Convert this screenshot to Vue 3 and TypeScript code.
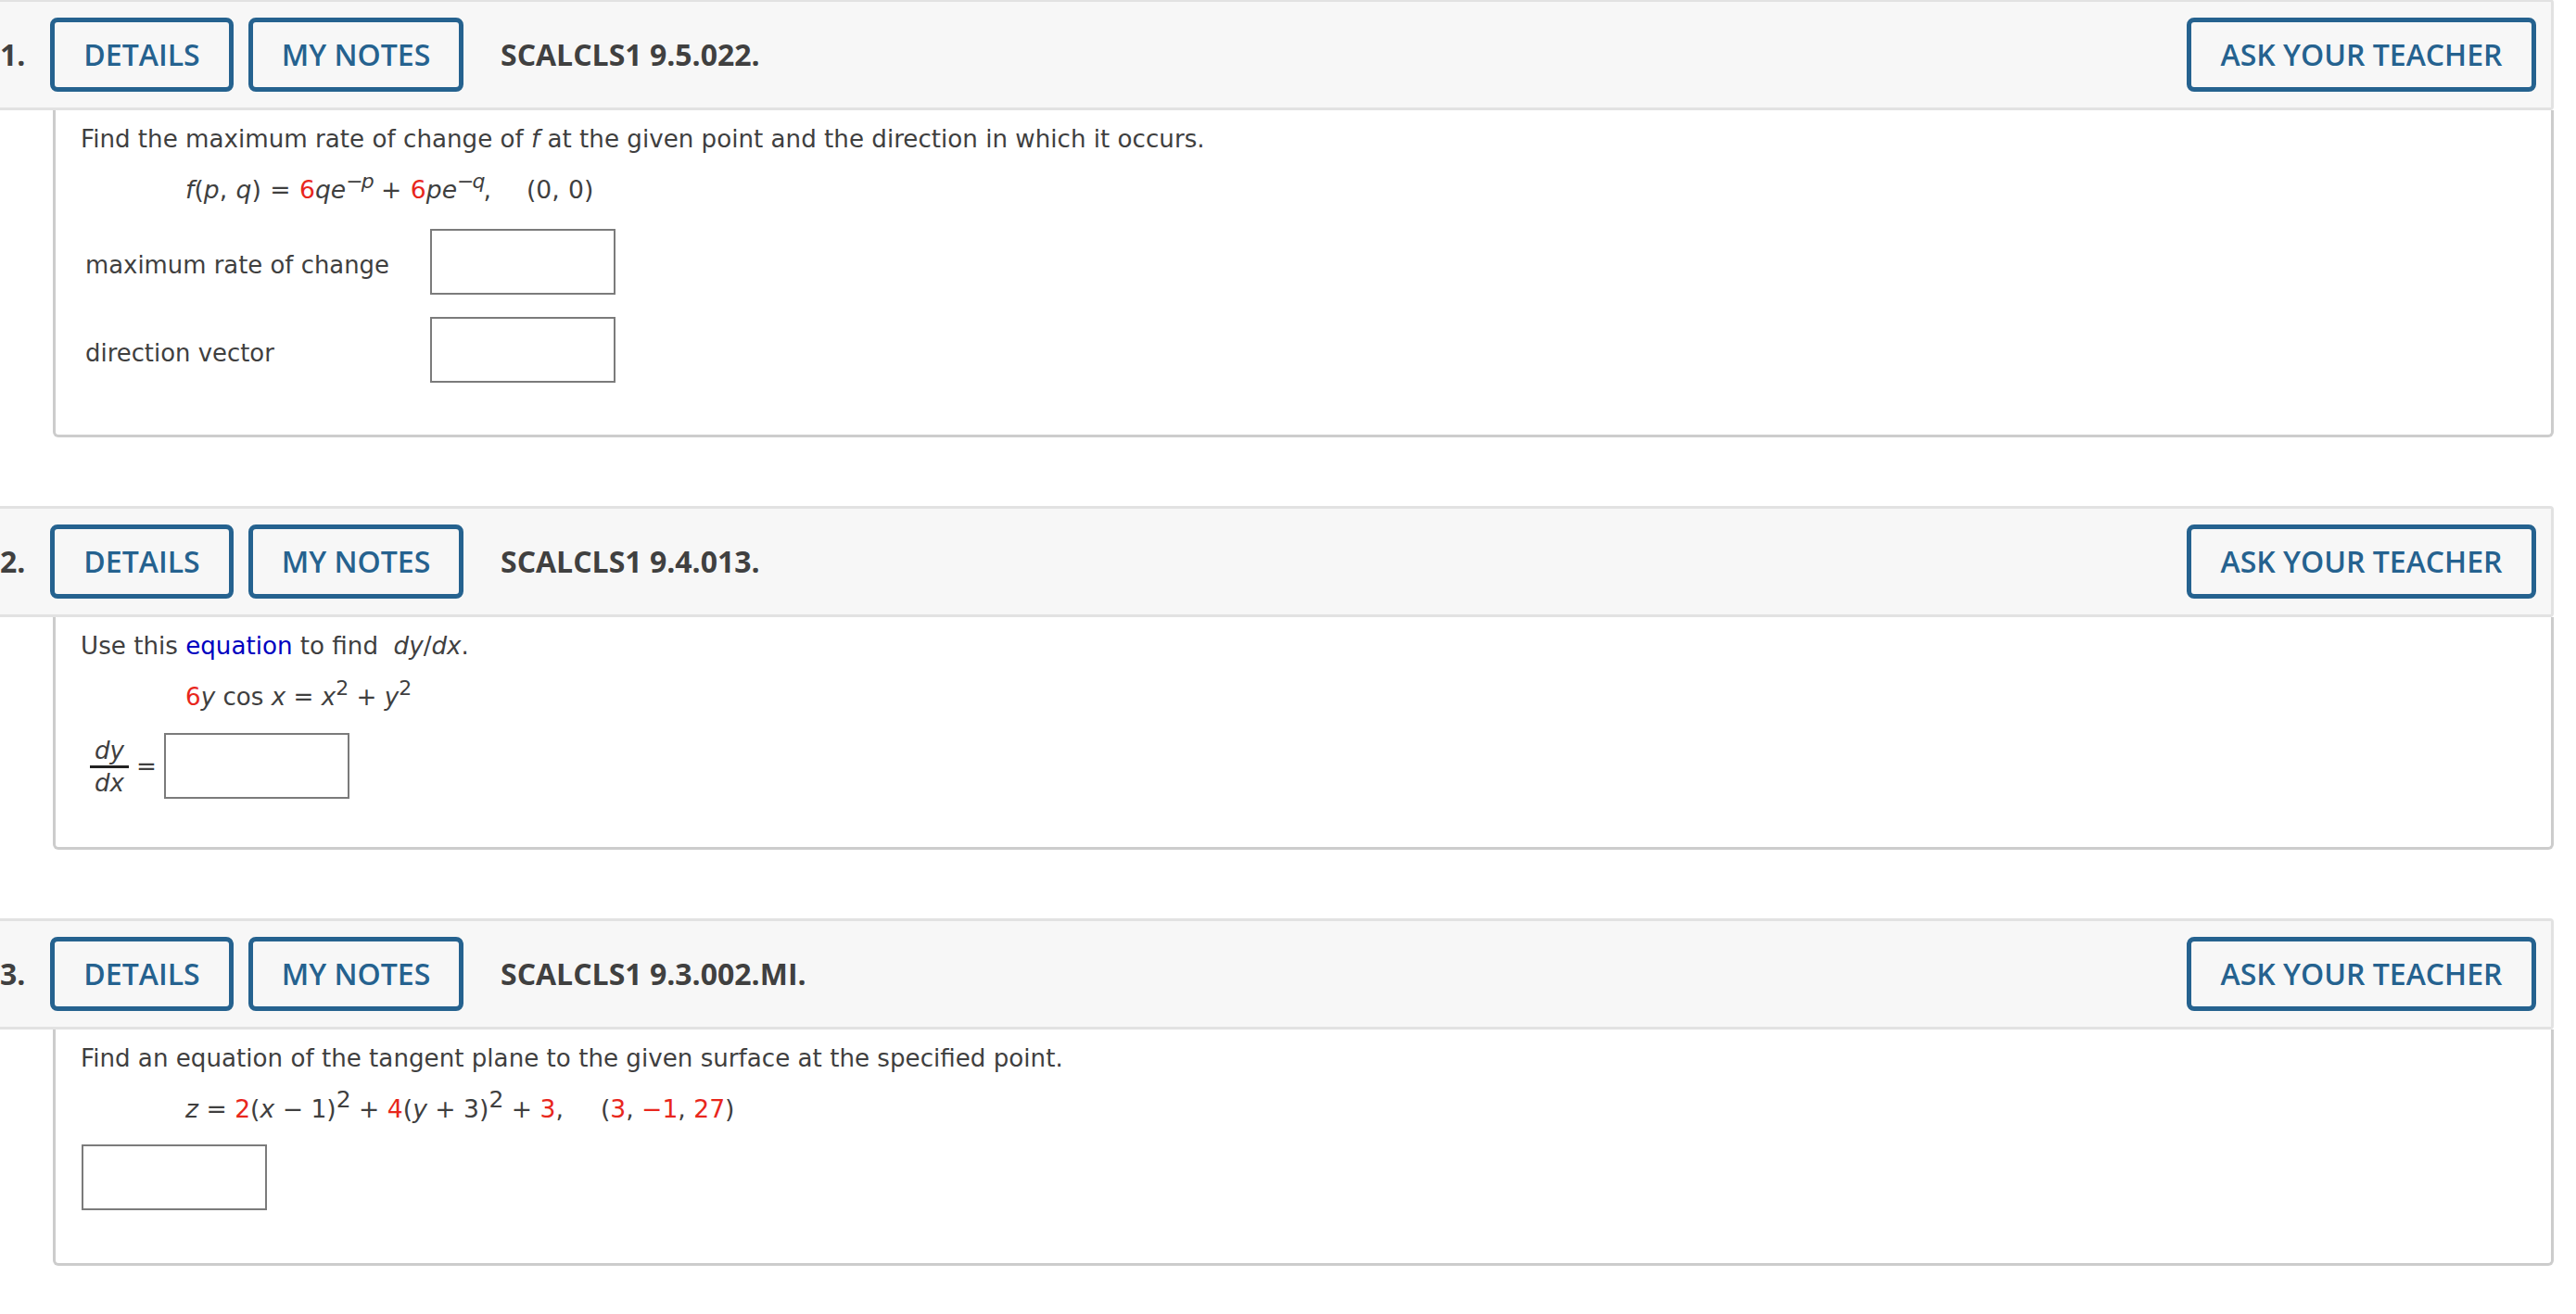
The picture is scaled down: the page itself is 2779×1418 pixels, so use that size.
<script setup lang="ts">
</script>

<template>
  <div class="page">
    <section class="question q1">
      <header class="bar">
        <span class="num">1.</span>
        <button class="btn details">DETAILS</button>
        <button class="btn notes">MY NOTES</button>
        <span class="code">SCALCLS1 9.5.022.</span>
        <button class="btn ask">ASK YOUR TEACHER</button>
      </header>
      <div class="body">
        <p class="line">Find the maximum rate of change of <i>f</i> at the given point and the direction in which it occurs.</p>
        <p class="eq"><i>f</i>(<i>p</i>, <i>q</i>) = <span class="r">6</span><i>qe</i><sup>&minus;<i>p</i></sup> + <span class="r">6</span><i>pe</i><sup>&minus;<i>q</i></sup>,<span class="gap"></span>(0, 0)</p>
        <div class="grid">
          <span class="label">maximum rate of change</span><span class="box"></span>
          <span class="label">direction vector</span><span class="box"></span>
        </div>
      </div>
    </section>

    <section class="question q2">
      <header class="bar">
        <span class="num">2.</span>
        <button class="btn details">DETAILS</button>
        <button class="btn notes">MY NOTES</button>
        <span class="code">SCALCLS1 9.4.013.</span>
        <button class="btn ask">ASK YOUR TEACHER</button>
      </header>
      <div class="body">
        <p class="line">Use this <span class="link">equation</span> to find&nbsp; <i>dy</i>/<i>dx</i>.</p>
        <p class="eq"><span class="r">6</span><i>y</i> cos <i>x</i> = <i>x</i><sup>2</sup> + <i>y</i><sup>2</sup></p>
        <div class="answer">
          <span class="frac"><i class="top">dy</i><i class="bottom">dx</i></span>
          <span class="equals">=</span>
          <span class="box"></span>
        </div>
      </div>
    </section>

    <section class="question q3">
      <header class="bar">
        <span class="num">3.</span>
        <button class="btn details">DETAILS</button>
        <button class="btn notes">MY NOTES</button>
        <span class="code">SCALCLS1 9.3.002.MI.</span>
        <button class="btn ask">ASK YOUR TEACHER</button>
      </header>
      <div class="body">
        <p class="line">Find an equation of the tangent plane to the given surface at the specified point.</p>
        <p class="eq"><i>z</i> = <span class="r">2</span>(<i>x</i> &minus; 1)<sup>2</sup> + <span class="r">4</span>(<i>y</i> + 3)<sup>2</sup> + <span class="r">3</span>,<span class="gap"></span>(<span class="r">3</span>, <span class="r">&minus;1</span>, <span class="r">27</span>)</p>
        <div class="solo"><span class="box"></span></div>
      </div>
    </section>
  </div>
</template>

<style>
html, body { margin: 0; background: #fff; }
</style>

<style scoped>
.page {
  width: 2779px;
  height: 1418px;
  overflow: hidden;
  background: #fff;
  font-family: "DejaVu Sans", Verdana, sans-serif;
  color: #3f3f3f;
}
.question { width: 2755px; box-sizing: border-box; margin-bottom: 74px; }
.q1 { margin-top: -1px; }
.bar {
  height: 120px;
  box-sizing: border-box;
  display: flex;
  align-items: center;
  background: #f7f7f7;
  border: 3px solid #e2e2e2;
  border-left: 0;
  border-radius: 0 4px 4px 0;
  font-family: "Open Sans", sans-serif;
}
.num { width: 54px; padding-bottom: 2px; font-size: 32px; font-weight: 700; color: #404040; }
.btn {
  height: 80px;
  box-sizing: border-box;
  border: 5px solid #25628f;
  border-radius: 8px;
  background: transparent;
  color: #25628f;
  font-family: "Open Sans", sans-serif;
  font-size: 32px;
  font-weight: 600;
  padding: 0 0 2px;
}
.details { width: 198px; }
.notes { width: 232px; margin-left: 16px; }
.ask { width: 377px; margin-left: auto; margin-right: 16px; }
.code { margin-left: 40px; padding-bottom: 2px; font-size: 32px; font-weight: 700; color: #404040; }
.body {
  margin-left: 57px;
  border: 3px solid #cccccc;
  border-top: 0;
  border-radius: 0 0 6px 6px;
  box-sizing: border-box;
  padding: 14px 0 0 27px;
  font-size: 26.15px;
  line-height: 34px;
}
.q1 .body { height: 353px; }
.q2 .body { height: 251px; }
.q3 .body { height: 255px; }
p { margin: 0; }
.eq { margin: 21px 0 0 113px; height: 34px; white-space: nowrap; font-size: 26.6px; }
.q1 .eq { word-spacing: 1px; }
.q2 .eq { font-size: 26.15px; }
sup { font-size: 25px; line-height: 0; vertical-align: 11px; }
.q1 sup, .q2 sup { font-size: 22px; }
.q1 sup { letter-spacing: -2px; }
.gap { display: inline-block; }
.q1 .gap { width: 38px; }
.q3 .gap { width: 40px; }
.r { color: #e8261c; }
.link { color: #0000c0; }
.box {
  display: block;
  width: 200px;
  height: 71px;
  box-sizing: border-box;
  border: 2px solid #7b7b7b;
  background: #fff;
}
.grid {
  display: grid;
  grid-template-columns: 372px 200px;
  row-gap: 24px;
  margin: 25px 0 0 5px;
  align-items: center;
}
.label { position: relative; top: 3px; font-size: 25.9px; }
.answer { display: flex; align-items: center; margin: 22px 0 0 10px; }
.frac { display: flex; flex-direction: column; align-items: center; width: 42px; line-height: 32px; }
.top { border-bottom: 3px solid #222; width: 100%; text-align: center; padding-top: 2px; }
.bottom { text-align: center; }
.equals { margin-left: 8px; margin-right: 8px; }
.solo { margin-top: 21px; margin-left: 1px; }
</style>
